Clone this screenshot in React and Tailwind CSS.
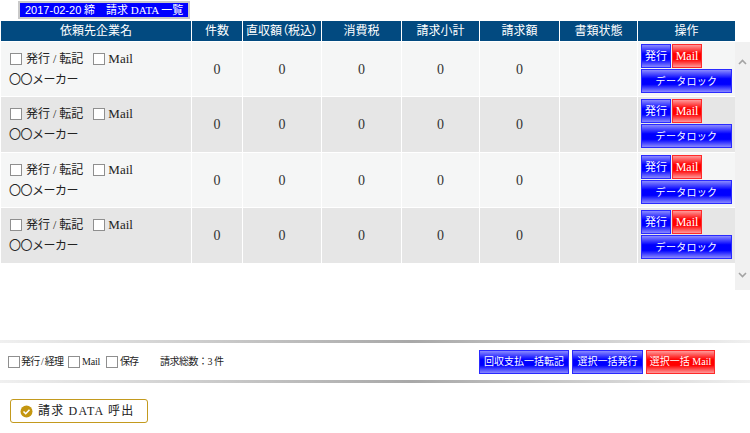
import React from "react";

const font = { fontFamily: '"Liberation Serif","Noto Sans CJK JP",serif' };
const cols = ["依頼先企業名", "件数", "直収額（税込）", "消費税", "請求小計", "請求額", "書類状態", "操作"];
const widths = ["w-[190px]", "w-[50px]", "w-[78px]", "w-[79px]", "w-[77px]", "w-[79px]", "w-[77px]", "w-[97px]"];

const Check = () => (
  <span className="inline-block bg-white border border-[#8f8f8f] w-[12px] h-[12px] shrink-0" />
);

const blue = "bg-[linear-gradient(#8a8aff_0%,#0000ff_40%,#0000ff_65%,#8a8aff_100%)] border border-[#2a2aff]";
const red = "bg-[linear-gradient(#ff9a9a_0%,#ff0000_40%,#ff0000_65%,#ff9a9a_100%)] border border-[#ff2a2a]";

function Row({ bg, h }) {
  return (
    <div className={`flex gap-[1px] ${h}`}>
      <div className={`w-[190px] ${bg} pl-[9px] pt-[9px] text-[12px] text-[#222]`}>
        <div className="flex items-center h-[16px]">
          <Check />
          <span className="ml-[4px]">発行 / 転記</span>
          <span className="ml-[10px] flex items-center"><Check /></span>
          <span className="ml-[3px] text-[13px]">Mail</span>
        </div>
        <div className="mt-[5px] h-[16px] leading-[16px] -ml-[1px] tracking-[-0.5px]">〇〇メーカー</div>
      </div>
      {[1, 2, 3, 4, 5].map((i) => (
        <div key={i} className={`${widths[i]} ${bg} flex items-center justify-center text-[14px] text-[#333]`}>0</div>
      ))}
      <div className={`w-[77px] ${bg}`} />
      <div className={`w-[97px] ${bg} pl-[3px] pt-[2px] flex flex-col gap-[1px]`}>
        <div className="flex gap-[1px]">
          <button className={`w-[30px] h-[24px] text-[11px] text-white ${blue}`}>発行</button>
          <button className={`w-[30px] h-[24px] text-[12px] text-white ${red}`}>Mail</button>
        </div>
        <button className={`w-[91px] h-[24px] text-[10px] tracking-[0.3px] text-white ${blue}`}>データロック</button>
      </div>
    </div>
  );
}

export default function App() {
  return (
    <div style={font} className="w-[750px] h-[433px] bg-white overflow-hidden">
      <div className="h-[21px] pl-[18px] pt-[1px]">
        <div className="w-[172px] h-[18px] bg-[#0000ff] border-[2px] border-[#c9c9c9] text-white text-[11px] leading-[14px] pl-[5px] whitespace-nowrap">
          <span style={{ fontFamily: '"Liberation Sans","Noto Sans CJK JP",sans-serif' }}>2017-02-20</span> 締　請求 DATA 一覧
        </div>
      </div>
      <div className="flex">
        <div className="pl-[1px] w-[735px] flex flex-col gap-[1px]">
          <div className="flex gap-[1px] h-[20px]">
            {cols.map((c, i) => (
              <div key={c} className={`${widths[i]} bg-[#024a80] text-white text-[12px] flex items-center justify-center whitespace-nowrap [font-feature-settings:"palt"]`}>{c}</div>
            ))}
          </div>
          <div className="flex flex-col gap-[1px]">
            <Row bg="bg-[#f5f6f6]" h="h-[54px]" />
            <Row bg="bg-[#e6e6e6]" h="h-[55px]" />
            <Row bg="bg-[#f5f6f6]" h="h-[54px]" />
            <Row bg="bg-[#e6e6e6]" h="h-[55px]" />
          </div>
        </div>
        <div className="w-[15px] h-[248px] mt-[21px] bg-[#f1f1f1] flex flex-col justify-between items-center text-[#a3a3a3] pt-[17px] pb-[12px]">
          <svg width="9" height="6" viewBox="0 0 9 6"><path d="M1 5l3.5-3.5L8 5" fill="none" stroke="currentColor" strokeWidth="1.6" /></svg>
          <svg width="9" height="6" viewBox="0 0 9 6"><path d="M1 1l3.5 3.5L8 1" fill="none" stroke="currentColor" strokeWidth="1.6" /></svg>
        </div>
      </div>

      <div className="mt-[50px] h-[3px] bg-[linear-gradient(90deg,#f0f0f0,#a8a8a8_55%,#f0f0f0)]" />
      <div className="h-[37px] flex items-center pl-[8px] text-[10px] text-[#222]">
        <Check />
        <span className="ml-[1px] w-[47px] tracking-[-0.8px] whitespace-nowrap">発行 / 経理</span>
        <Check />
        <span className="ml-[2px] w-[24px] tracking-[-0.2px]">Mail</span>
        <Check />
        <span className="ml-[2px] w-[40px] tracking-[-1px]">保存</span>
        <span className="w-[319px] tracking-[-0.5px] whitespace-nowrap">請求総数：3 件</span>
        <div className="flex gap-[3px] text-white text-[10px] whitespace-nowrap">
          <button className={`w-[90px] h-[24px] ${blue}`}>回収支払一括転記</button>
          <button className={`w-[71px] h-[24px] ${blue}`}>選択一括発行</button>
          <button className={`w-[69px] h-[24px] ${red}`}>選択一括 Mail</button>
        </div>
      </div>
      <div className="h-[3px] bg-[linear-gradient(90deg,#f0f0f0,#a8a8a8_55%,#f0f0f0)]" />
      <div className="pl-[10px] pt-[16px]">
        <button className="w-[138px] h-[24px] border border-[#c39a1e] rounded-[3px] flex items-center pl-[9px] text-[12px] tracking-[1.2px] text-[#222] whitespace-nowrap">
          <svg width="13" height="13" viewBox="0 0 13 13" className="mr-[5px] shrink-0">
            <circle cx="6.5" cy="6.5" r="6" fill="#c4960f" />
            <path d="M3.5 6.5l2.2 2.2L9.5 4.8" fill="none" stroke="#fff" strokeWidth="1.6" />
          </svg>
          請求 DATA 呼出
        </button>
      </div>
    </div>
  );
}
